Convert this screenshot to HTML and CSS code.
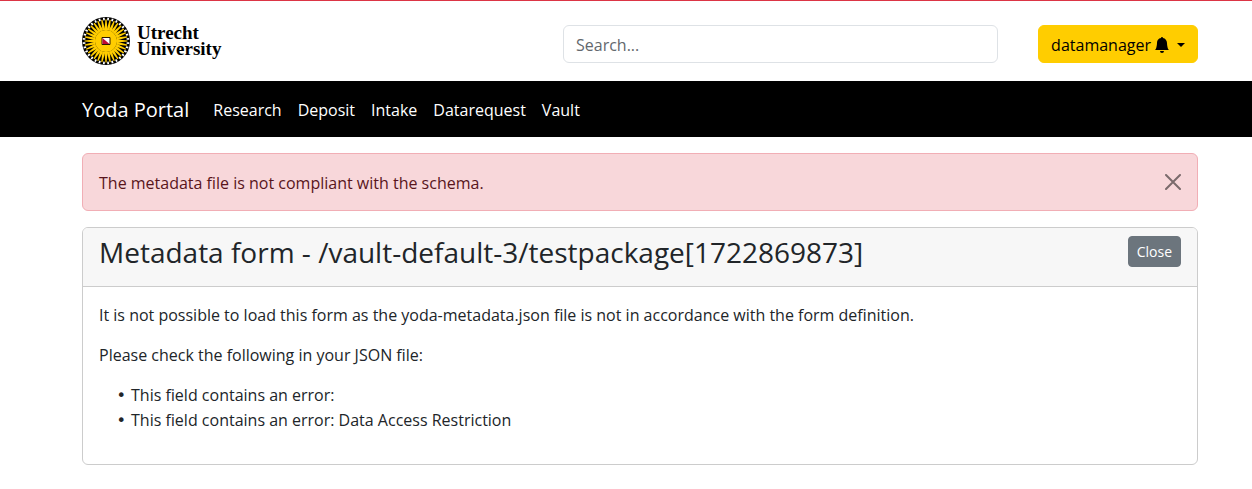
FILE: index.html
```html
<!DOCTYPE html>
<html lang="en">
<head>
<meta charset="utf-8">
<title>Yoda Portal</title>
<link rel="stylesheet" href="styles.css">
</head>
<body>
<header class="masthead container">
  <a class="logo" href="#" aria-label="Utrecht University">
    <svg class="logo-sun" viewBox="0 0 48 48" aria-hidden="true">
      <defs>
        <path id="ray" d="M22.500 13L23.400 2.500h1.200L25.500 13z"/>
        <g id="rays">
          <use href="#ray"/>
          <use href="#ray" transform="rotate(11.250 24 24)"/>
          <use href="#ray" transform="rotate(22.500 24 24)"/>
          <use href="#ray" transform="rotate(33.750 24 24)"/>
        </g>
      </defs>
      <circle cx="24" cy="24" r="24" fill="#000"/>
      <circle cx="24" cy="24" r="11" fill="#ffcd00"/>
      <g fill="#ffcd00">
        <use href="#rays"/>
        <use href="#rays" transform="rotate(45 24 24)"/>
        <use href="#rays" transform="rotate(90 24 24)"/>
        <use href="#rays" transform="rotate(135 24 24)"/>
        <use href="#rays" transform="rotate(180 24 24)"/>
        <use href="#rays" transform="rotate(225 24 24)"/>
        <use href="#rays" transform="rotate(270 24 24)"/>
        <use href="#rays" transform="rotate(315 24 24)"/>
      </g>
      <circle cx="24" cy="24" r="22" fill="none" stroke="#fff" stroke-width="2.600" pathLength="64" stroke-dasharray=".8 1.200" stroke-dashoffset="-.6"/>
      <path d="M20 20.500h8v7h-8z" fill="#fff" stroke="#2a1a00" stroke-width="1"/>
      <path d="M20.500 21L27.500 27H20.500z" fill="#c00a35"/>
    </svg>
    <span class="logo-name">Utrecht<br>University</span>
  </a>
  <div class="tools">
    <input class="search" type="search" placeholder="Search..." aria-label="Search">
    <button class="user" type="button">datamanager
      <svg class="bell" viewBox="0 0 16 16" aria-hidden="true"><path d="M8 16a2 2 0 0 0 2-2H6a2 2 0 0 0 2 2zm.995-14.901a1 1 0 1 0-1.990 0A5.002 5.002 0 0 0 3 6c0 1.098-.5 6-2 7h14c-1.500-1-2-5.902-2-7 0-2.420-1.720-4.440-4.005-4.901z"/></svg>
      <span class="caret"></span>
    </button>
  </div>
</header>
<nav class="navbar container">
  <a class="brand" href="#">Yoda Portal</a>
  <a class="nav-link" href="#">Research</a>
  <a class="nav-link" href="#">Deposit</a>
  <a class="nav-link" href="#">Intake</a>
  <a class="nav-link" href="#">Datarequest</a>
  <a class="nav-link" href="#">Vault</a>
</nav>
<main class="content container">
  <div class="alert" role="alert">
    <span>The metadata file is not compliant with the schema.</span>
    <button class="dismiss" type="button" aria-label="Dismiss">
      <svg viewBox="0 0 16 16" aria-hidden="true"><path d="M1 1L15 15M15 1L1 15"/></svg>
    </button>
  </div>
  <section class="card">
    <div class="card-header">
      <h1 class="card-title">Metadata form - /vault-default-3/testpackage[1722869873]</h1>
      <button class="close" type="button">Close</button>
    </div>
    <div class="card-body">
      <p>It is not possible to load this form as the yoda-metadata.json file is not in accordance with the form definition.</p>
      <p>Please check the following in your JSON file:</p>
      <ul class="errors">
        <li>This field contains an error:</li>
        <li>This field contains an error: Data Access Restriction</li>
      </ul>
    </div>
  </section>
</main>
</body>
</html>
```
FILE: styles.css
```css
* { box-sizing: border-box; }
body {
  margin: 0;
  border-top: 1px solid #dc3545;
  background: #fff;
  color: #212529;
  font: 16px/24px "Open Sans", "Noto Sans", sans-serif;
}
button, input { font: inherit; }
a { text-decoration: none; }
.container { padding-left: 82px; padding-right: 54px; }
.masthead {
  display: flex;
  align-items: flex-start;
  justify-content: space-between;
  padding-top: 16px;
  padding-bottom: 16px;
}
.logo { display: flex; align-items: center; gap: 7px; color: #000; }
.logo-sun { width: 48px; height: 48px; }
.logo-name { font: bold 19px/16px "Liberation Serif", serif; }
.tools { display: flex; align-items: center; gap: 40px; width: 57%; max-width: 635px; padding-top: 8px; }
.search {
  flex: 1;
  min-width: 0;
  height: 38px;
  padding: 7px 12px 5px;
  border: 1px solid #dee2e6;
  border-radius: 6px;
  background: #fff;
  color: #212529;
}
.search::placeholder { color: #63686d; opacity: 1; }
.user {
  display: flex;
  align-items: center;
  height: 38px;
  padding: 7px 12px 5px;
  border: 1px solid #ffcd00;
  border-radius: 6px;
  background: #ffcd00;
  color: #000;
}
.bell { width: 16px; height: 16px; margin: 0 7px 0 3px; }
.caret { border: 4px solid transparent; border-top-color: #000; border-bottom: 0; }
.navbar {
  display: flex;
  align-items: center;
  gap: 16px;
  height: 56px;
  padding-top: 2px;
  background: #000;
}
.brand { margin-right: 8px; color: #fff; font-size: 20px; line-height: 30px; }
.nav-link { color: #fff; }
.content { padding-top: 16px; padding-bottom: 24px; }
.alert {
  display: flex;
  align-items: flex-start;
  justify-content: space-between;
  margin-bottom: 16px;
  padding: 17px 16px 15px;
  border: 1px solid #f1aeb5;
  border-radius: 6px;
  background: #f8d7da;
  color: #58151c;
}
.dismiss { display: flex; margin-top: 3px; padding: 0; border: 0; background: none; opacity: .5; }
.dismiss svg { width: 16px; height: 16px; fill: none; stroke: #000; stroke-width: 2; stroke-linecap: round; }
.card { border: 1px solid #ccc; border-radius: 6px; overflow: hidden; }
.card-header {
  display: flex;
  align-items: flex-start;
  justify-content: space-between;
  padding: 8px 16px;
  border-bottom: 1px solid #ccc;
  background: #f7f7f7;
}
.card-title { margin: 0 0 10px; font-size: 28px; font-weight: 400; line-height: 32px; }
.close {
  height: 31px;
  padding: 4px 8px;
  border: 1px solid #6c757d;
  border-radius: 4px;
  background: #6c757d;
  color: #fff;
  font-size: 14px;
  line-height: 21px;
}
.card-body { padding: 16px; }
.card-body p { margin: 0 0 16px; }
.errors { margin: 0 0 16px; padding-left: 32px; list-style-type: "\2022\a0"; }
.errors li + li { margin-top: 1px; }
.errors li::marker { font-family: "DejaVu Sans", sans-serif; }
```
